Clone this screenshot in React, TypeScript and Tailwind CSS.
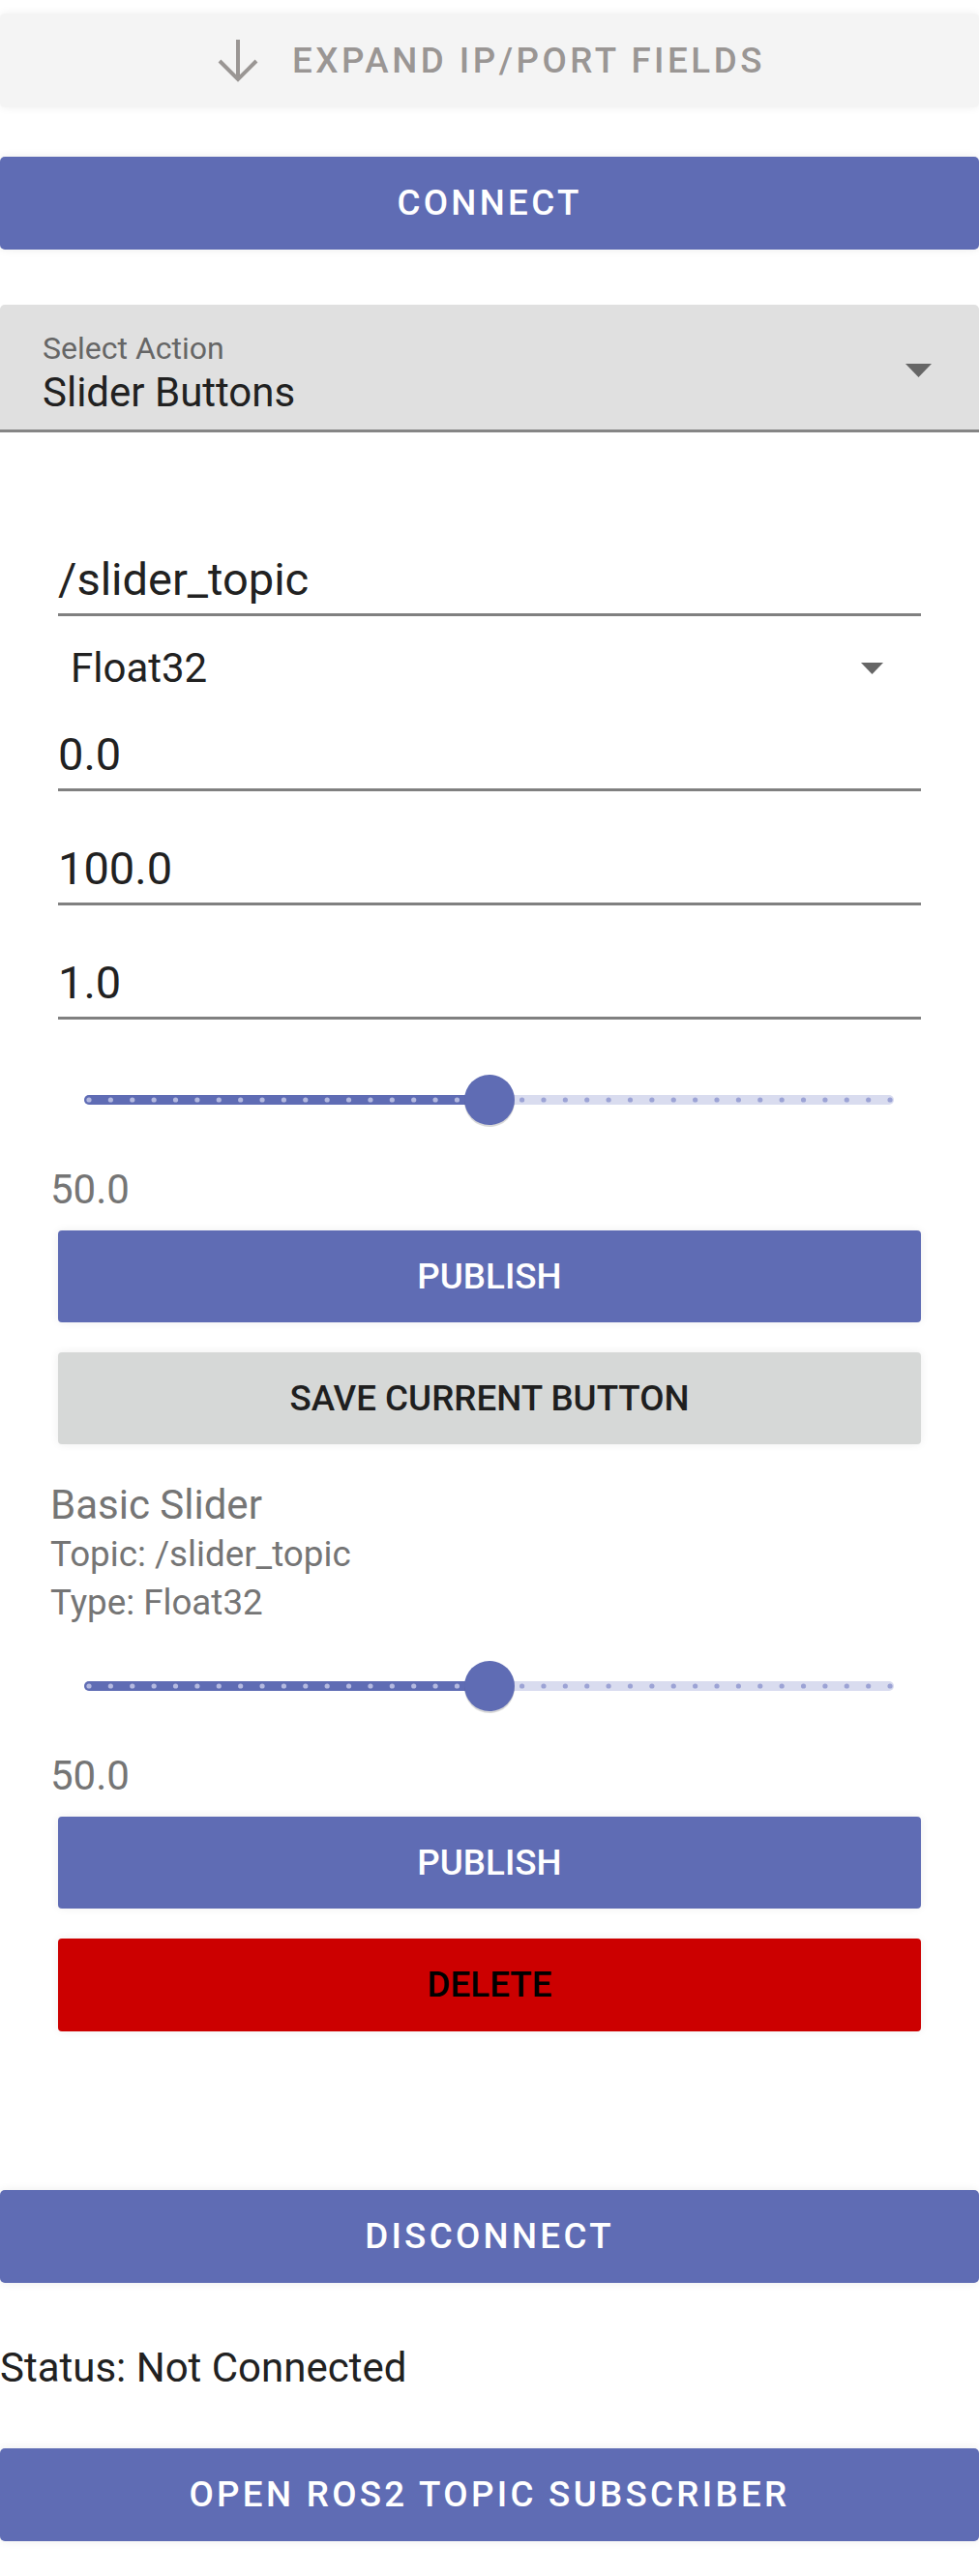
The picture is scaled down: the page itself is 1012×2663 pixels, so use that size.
const PRIMARY = '#5f6cb4';

function ArrowDownIcon() {
  return (
    <svg width={42} height={44} viewBox="0 0 42 44" fill="none" stroke="#9a9694" strokeWidth={4}>
      <path d="M21 0 V41" />
      <path d="M2 22 L21 41 L40 22" />
    </svg>
  );
}

function Slider() {
  const dots = Array.from({ length: 38 }, (_, i) => 92 + i * 22.38);
  return (
    <svg width={860} height={60} viewBox="80 0 860 60" className="block ml-[80px]">
      <rect x={87} y={25} width={837} height={10} rx={5} fill="#d9dcef" />
      <rect x={87} y={25} width={419} height={10} rx={5} fill={PRIMARY} />
      {dots.map((cx) => (
        <circle key={cx} cx={cx} cy={30} r={2.6} fill={cx < 506 ? '#b4b9e0' : '#9ca3d5'} />
      ))}
      <circle cx={506} cy={32} r={26} fill="#000" opacity={0.15} />
      <circle cx={506} cy={30} r={26} fill={PRIMARY} />
    </svg>
  );
}

function OuterButton({ label, className = '' }: { label: string; className?: string }) {
  return (
    <div
      className={`h-[96px] w-full rounded-[5px] bg-[#5f6cb4] flex items-center justify-center text-white text-[36.75px] font-medium tracking-[3.3px] shadow-[0_0_10px_rgba(0,0,0,0.08)] ${className}`}
    >
      {label}
    </div>
  );
}

function InnerButton({ label, bg, color, className = '' }: { label: string; bg: string; color: string; className?: string }) {
  return (
    <div
      className={`mx-[60px] h-[95px] rounded-[4px] flex items-center justify-center text-[36.75px] font-medium shadow-[0_0_10px_rgba(0,0,0,0.07)] ${className}`}
      style={{ backgroundColor: bg, color }}
    >
      {label}
    </div>
  );
}

function Field({ value, className = '' }: { value: string; className?: string }) {
  return (
    <div className={`mx-[60px] text-[47px] leading-[60px] pb-[5px] border-b-[3px] border-[#808080] text-[#212121] ${className}`}>
      {value}
    </div>
  );
}

export default function App() {
  return (
    <div className="w-[1012px] min-h-[2663px] bg-white font-['Roboto',sans-serif] pb-[36px]">
      <div className="mt-[14px] h-[97px] rounded-[5px] bg-[#f4f4f4] flex items-center justify-center gap-[35px] pl-[4px] shadow-[0_0_10px_rgba(0,0,0,0.07)]">
        <ArrowDownIcon />
        <span className="text-[36.75px] font-medium tracking-[3.5px] text-[#9a9694]">EXPAND IP/PORT FIELDS</span>
      </div>

      <OuterButton label="CONNECT" className="mt-[51px]" />

      <div className="mt-[57px] h-[132px] rounded-t-[5px] bg-[#e0e0e0] border-b-[3px] border-[#858585] pl-[44px] pr-[49px] flex items-start">
        <div className="flex-1 pt-[27px]">
          <div className="text-[32px] leading-[36px] text-[#666]">Select Action</div>
          <div className="mt-[3px] text-[42px] leading-[50px] text-[#212121]">Slider Buttons</div>
        </div>
        <svg width={27} height={14} viewBox="0 0 27 14" className="mt-[61px]">
          <path d="M0 0 H27 L13.5 14 Z" fill="#666" />
        </svg>
      </div>

      <Field value="/slider_topic" className="mt-[122px]" />

      <div className="mx-[60px] mt-[24px] h-[60px] pl-[13px] pr-[39px] flex items-center justify-between">
        <span className="text-[42px] leading-[60px] text-[#212121]">Float32</span>
        <svg width={23} height={12} viewBox="0 0 23 12">
          <path d="M0 0 H23 L11.5 12 Z" fill="#666" />
        </svg>
      </div>

      <Field value="0.0" className="mt-[29px]" />
      <Field value="100.0" className="mt-[50px]" />
      <Field value="1.0" className="mt-[50px]" />

      <div className="mt-[53px]">
        <Slider />
      </div>
      <div className="mt-[38px] ml-[52px] text-[42px] leading-[50px] text-[#757575]">50.0</div>

      <InnerButton label="PUBLISH" bg={PRIMARY} color="#fff" className="mt-[17px]" />
      <InnerButton label="SAVE CURRENT BUTTON" bg="#d6d8d7" color="#1f1f1f" className="mt-[31px]" />

      <div className="mt-[38px] ml-[52px] text-[#757575]">
        <div className="text-[42px] leading-[50px]">Basic Slider</div>
        <div className="text-[36.75px] leading-[50px] mt-[1px]">Topic: /slider_topic</div>
        <div className="text-[36.75px] leading-[50px]">Type: Float32</div>
      </div>

      <div className="mt-[31px]">
        <Slider />
      </div>
      <div className="mt-[38px] ml-[52px] text-[42px] leading-[50px] text-[#757575]">50.0</div>

      <InnerButton label="PUBLISH" bg={PRIMARY} color="#fff" className="mt-[17px]" />
      <InnerButton label="DELETE" bg="#cc0000" color="#000" className="mt-[31px] h-[96px]" />

      <OuterButton label="DISCONNECT" className="mt-[164px]" />

      <div className="mt-[63px] text-[42px] leading-[50px] text-[#212121]">Status: Not Connected</div>

      <OuterButton label="OPEN ROS2 TOPIC SUBSCRIBER" className="mt-[58px]" />
    </div>
  );
}
